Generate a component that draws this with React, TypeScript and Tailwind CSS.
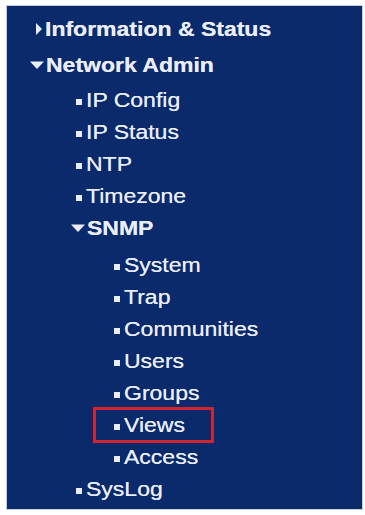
import React from 'react';

type Item = {
  label: string;
  level: 0 | 1 | 2;
  kind: 'closed' | 'open' | 'leaf';
  extra?: string;
  selected?: boolean;
};

const items: Item[] = [
  { label: 'Information & Status', level: 0, kind: 'closed' },
  { label: 'Network Admin', level: 0, kind: 'open', extra: 'mt-[4px]' },
  { label: 'IP Config', level: 1, kind: 'leaf', extra: 'mt-[3px]' },
  { label: 'IP Status', level: 1, kind: 'leaf' },
  { label: 'NTP', level: 1, kind: 'leaf' },
  { label: 'Timezone', level: 1, kind: 'leaf' },
  { label: 'SNMP', level: 1, kind: 'open' },
  { label: 'System', level: 2, kind: 'leaf', extra: 'mt-[5px]' },
  { label: 'Trap', level: 2, kind: 'leaf' },
  { label: 'Communities', level: 2, kind: 'leaf' },
  { label: 'Users', level: 2, kind: 'leaf' },
  { label: 'Groups', level: 2, kind: 'leaf' },
  { label: 'Views', level: 2, kind: 'leaf', selected: true },
  { label: 'Access', level: 2, kind: 'leaf' },
  { label: 'SysLog', level: 1, kind: 'leaf' },
];

function RightArrow() {
  return (
    <svg width="8" height="12" viewBox="0 0 8 12" className="mr-[2px]">
      <path d="M1 0 L7 6 L1 12 Z" fill="#e9edf8" />
    </svg>
  );
}

function DownArrow() {
  return (
    <svg width="14" height="8" viewBox="0 0 14 8" className="mr-[2px]">
      <path d="M0 0.5 L14 0.5 L7 8 Z" fill="#e9edf8" />
    </svg>
  );
}

function Bullet() {
  return <span className="w-[6px] h-[6px] bg-[#e9edf8] mr-[4px] mt-[3px]" />;
}

function Row({ item }: { item: Item }) {
  const indent =
    item.level === 0
      ? item.kind === 'closed'
        ? 'pl-[28px]'
        : 'pl-[23px]'
      : item.level === 1
      ? item.kind === 'open'
        ? 'pl-[64px]'
        : 'pl-[69px]'
      : 'pl-[107px]';

  return (
    <div className={`relative h-[32px] flex items-center ${indent} ${item.extra ?? ''}`}>
      {item.kind === 'closed' && <RightArrow />}
      {item.kind === 'open' && <DownArrow />}
      {item.kind === 'leaf' && <Bullet />}
      <span
        className={`inline-block origin-left scale-x-[1.15] text-[20px] leading-none text-[#e9edf8] whitespace-nowrap [text-shadow:0_0_0.6px_#e9edf8] ${
          item.level === 0 || item.kind === 'open' ? 'font-bold' : 'font-normal'
        }`}
      >
        {item.label}
      </span>
      {item.selected && (
        <div className="absolute left-[86px] top-[-2px] w-[121px] h-[36px] border-[3px] border-[#cf2530]" />
      )}
    </div>
  );
}

export default function App() {
  return (
    <div
      className="w-[365px] h-[515px] bg-white pt-[5px] pl-[6px]"
      style={{ fontFamily: '"Liberation Sans", Arial, sans-serif' }}
    >
      <div className="w-[357px] h-[505px] bg-[#0b2a6c] border border-[#c9cdd8] pt-[7px]">
        {items.map((item) => (
          <Row key={item.label} item={item} />
        ))}
      </div>
    </div>
  );
}
